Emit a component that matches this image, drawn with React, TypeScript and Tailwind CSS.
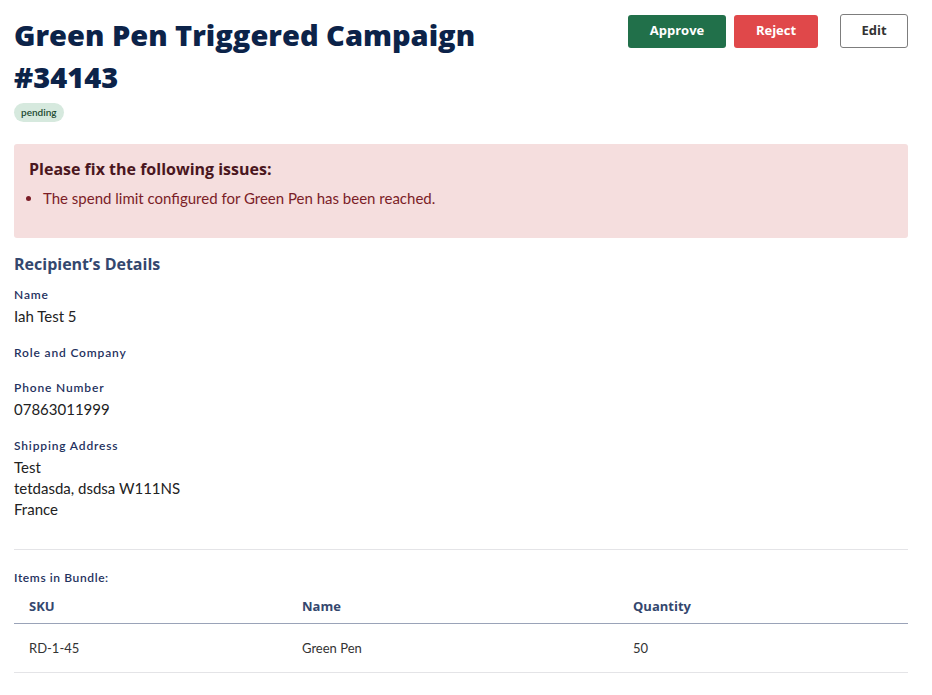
const items = [{ sku: "RD-1-45", name: "Green Pen", quantity: 50 }];

const Field = ({ label, lines }: { label: string; lines: string[] }) => (
  <div className="mb-[17px]">
    <div className="text-[12px] leading-[18px] tracking-[0.07em] font-semibold text-[#1f3260]">{label}</div>
    {lines.length > 0 && (
      <div className="mt-[2px] text-[15px] leading-[21px] text-[#222]">
        {lines.map((line) => (
          <div key={line}>{line}</div>
        ))}
      </div>
    )}
  </div>
);

const App = () => {
  return (
    <div className="min-h-screen bg-white pl-[14px] pr-[24px] pt-[14px] font-['Lato',sans-serif]">
      <div className="flex items-start justify-between">
        <div className="w-[540px]">
          <h1 className="font-['Open_Sans',sans-serif] text-[29px] leading-[42px] font-extrabold text-[#0c2349]">
            Green Pen Triggered Campaign #34143
          </h1>
          <span className="mt-[4px] inline-block rounded-full bg-[#d6e9de] px-[7px] py-[3px] text-[10px] font-semibold leading-[13px] text-[#1d4a31]">
            pending
          </span>
        </div>
        <div className="flex items-center font-['Open_Sans',sans-serif]">
          <button className="h-[33px] w-[98px] rounded-[3px] bg-[#21704a] text-[13px] font-bold text-white">
            Approve
          </button>
          <button className="ml-[8px] h-[33px] w-[84px] rounded-[3px] bg-[#e0484a] text-[13px] font-bold text-white">
            Reject
          </button>
          <button className="ml-[22px] h-[34px] w-[68px] rounded-[3px] border border-[#7d7d7d] bg-white text-[13px] font-bold text-[#333]">
            Edit
          </button>
        </div>
      </div>

      <div className="mt-[22px] h-[94px] rounded-[3px] bg-[#f5dede] px-[15px] pt-[14px]">
        <div className="font-['Open_Sans',sans-serif] text-[16px] leading-[22px] font-bold text-[#4a1620]">
          Please fix the following issues:
        </div>
        <ul className="mt-[8px] list-disc pl-[14px] text-[15px] leading-[21px] text-[#7b1d27]">
          <li>The spend limit configured for Green Pen has been reached.</li>
        </ul>
      </div>

      <h2 className="mt-[15px] font-['Open_Sans',sans-serif] text-[16px] leading-[22px] font-bold text-[#34476e]">
        Recipient’s Details
      </h2>

      <div className="mt-[11px]">
        <Field label="Name" lines={["Iah Test 5"]} />
        <Field label="Role and Company" lines={[]} />
        <Field label="Phone Number" lines={["07863011999"]} />
        <Field label="Shipping Address" lines={["Test", "tetdasda, dsdsa W111NS", "France"]} />
      </div>

      <hr className="mt-[29px] border-t border-[#e4e4e7]" />

      <div className="mt-[20px] text-[12px] leading-[16px] tracking-[0.05em] font-semibold text-[#1f3260]">
        Items in Bundle:
      </div>

      <div className="mt-[3px]">
        <div className="grid grid-cols-[273px_331px_1fr] border-b border-[#9aa3b8] py-[8px] font-['Open_Sans',sans-serif] text-[13px] font-bold leading-[18px] text-[#34476e]">
          <div className="pl-[15px]">SKU</div>
          <div className="pl-[15px]">Name</div>
          <div className="pl-[15px]">Quantity</div>
        </div>
        {items.map((item) => (
          <div
            key={item.sku}
            className="grid grid-cols-[273px_331px_1fr] border-b border-[#e4e4e7] py-[15px] text-[13px] leading-[18px] text-[#333]"
          >
            <div className="pl-[15px]">{item.sku}</div>
            <div className="pl-[15px]">{item.name}</div>
            <div className="pl-[15px]">{item.quantity}</div>
          </div>
        ))}
      </div>
    </div>
  );
};

export default App;
